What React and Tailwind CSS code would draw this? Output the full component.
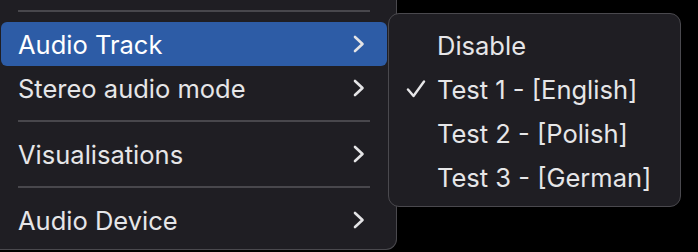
import React from 'react';

const font = { fontFamily: 'Inter, "Noto Sans", sans-serif' };

function Chevron() {
  return (
    <svg width="12" height="18" viewBox="0 0 12 18" className="shrink-0">
      <polyline points="2,2 9.5,9 2,16" fill="none" stroke="#e4e4e6" strokeWidth="2.6" strokeLinecap="round" strokeLinejoin="round" />
    </svg>
  );
}

function Check() {
  return (
    <svg width="20" height="18" viewBox="0 0 20 18">
      <polyline points="2,9.5 7.5,16 18,1.5" fill="none" stroke="#e6e6e8" strokeWidth="2.4" strokeLinecap="round" strokeLinejoin="round" />
    </svg>
  );
}

function Separator() {
  return (
    <div className="py-[10px] px-[17px]">
      <div className="h-[2px] bg-[#48474c]" />
    </div>
  );
}

function MenuRow({ label, active }) {
  return (
    <div
      className={`h-[44px] flex items-center justify-between pl-[17px] pr-[22px] rounded-[6px] ${
        active ? 'bg-[#2d5ca6] text-white' : 'text-[#e6e6e8]'
      }`}
    >
      <span className="text-[25.5px] leading-none pt-[1px]">{label}</span>
      <Chevron />
    </div>
  );
}

const tracks = [
  { label: 'Disable', checked: false },
  { label: 'Test 1 - [English]', checked: true },
  { label: 'Test 2 - [Polish]', checked: false },
  { label: 'Test 3 - [German]', checked: false },
];

export default function App() {
  return (
    <div className="relative w-[698px] h-[252px] bg-black overflow-hidden" style={font}>
      {/* Main menu */}
      <div className="w-[407px] -ml-[10px] h-[250px] bg-[#1f1e23] border border-t-0 border-[#4a494e] rounded-b-[11px] pl-[10px] pr-[9px]">
        <Separator />
        <MenuRow label="Audio Track" active />
        <MenuRow label="Stereo audio mode" />
        <Separator />
        <MenuRow label="Visualisations" />
        <Separator />
        <MenuRow label="Audio Device" />
      </div>

      {/* Submenu */}
      <div className="absolute left-[388px] top-[13px] w-[293px] h-[194px] bg-[#1f1e23] border border-[#4a494e] rounded-[11px] pt-[9px]">
        {tracks.map((t) => (
          <div key={t.label} className="h-[44px] flex items-center text-[#e6e6e8]">
            <div className="w-[48px] pl-[17px] flex items-center">
              {t.checked && <Check />}
            </div>
            <span className="text-[25.5px] leading-none pt-[1px]">{t.label}</span>
          </div>
        ))}
      </div>
    </div>
  );
}
